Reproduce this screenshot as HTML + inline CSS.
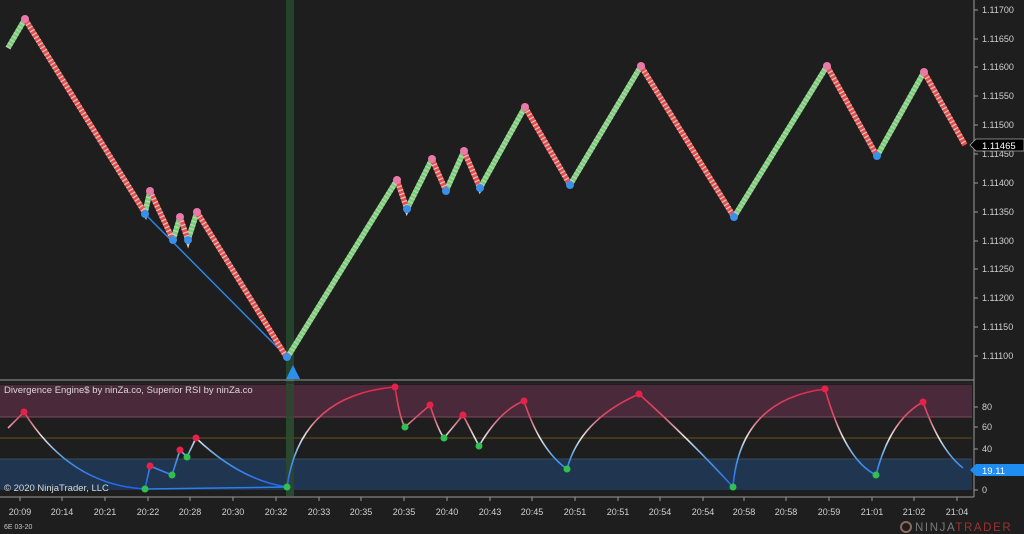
<!DOCTYPE html>
<html><head><meta charset="utf-8"><style>
html,body{margin:0;padding:0;background:#1e1e1e;overflow:hidden}
svg{display:block;font-family:"Liberation Sans",Arial,sans-serif}
</style></head><body>
<svg width="1024" height="534" viewBox="0 0 1024 534" xmlns="http://www.w3.org/2000/svg">
<defs>
<linearGradient id="rg" gradientUnits="userSpaceOnUse" x1="0" y1="385" x2="0" y2="490">
<stop offset="0" stop-color="#e6224a"/><stop offset="0.3" stop-color="#d8506a"/>
<stop offset="0.5" stop-color="#e8e8e8"/><stop offset="0.7" stop-color="#4a9ae8"/>
<stop offset="1" stop-color="#1f5ff0"/></linearGradient>
</defs>
<rect width="1024" height="534" fill="#1e1e1e"/>
<rect x="286" y="0" width="8" height="496" fill="#25422a"/>
<rect x="0" y="385" width="972" height="32" fill="#4a2a3a"/>
<line x1="0" y1="417" x2="972" y2="417" stroke="#7a4a5e" stroke-width="1"/>
<rect x="0" y="459" width="972" height="31" fill="#1f3550"/>
<line x1="0" y1="459" x2="972" y2="459" stroke="#3a4a5a" stroke-width="1"/>
<line x1="0" y1="438" x2="972" y2="438" stroke="#6a5020" stroke-width="1"/>
<rect x="286" y="383" width="8" height="113" fill="#2a4a2e" opacity="0.8"/>
<line x1="0" y1="380" x2="974" y2="380" stroke="#9a9a9a" stroke-width="1"/>
<line x1="0" y1="383" x2="972" y2="383" stroke="#2a2a2a" stroke-width="1"/>
<line x1="145" y1="214" x2="287" y2="357" stroke="#2a86e6" stroke-width="1.5"/>
<g fill="none" stroke-width="5.5" stroke-linecap="butt">
<g stroke="#70d66c">
<polyline points="8,48 25,19"/><polyline points="145,213 150,191"/><polyline points="173,240 180,217"/><polyline points="188,240 197,212"/>
<polyline points="287,358 397,180"/><polyline points="407,209 432,159"/><polyline points="446,191 464,151"/><polyline points="480,188 525,107"/>
<polyline points="570,185 641,66"/><polyline points="734,217 827,66"/><polyline points="877,156 924,72"/>
</g>
<g stroke="#ee4a48">
<polyline points="25,19 145,213"/><polyline points="150,191 173,240"/><polyline points="180,217 188,240"/><polyline points="197,212 287,358"/>
<polyline points="397,180 407,209"/><polyline points="432,159 446,191"/><polyline points="464,151 480,188"/><polyline points="525,107 570,185"/>
<polyline points="641,66 734,217"/><polyline points="827,66 877,156"/><polyline points="924,72 965,145"/>
</g>
<polyline stroke="#c8c8c8" stroke-width="5.5" stroke-dasharray="1.3 2.6" points="8,48 25,19 145,213 150,191 173,240 180,217 188,240 197,212 287,358 397,180 407,209 432,159 446,191 464,151 480,188 525,107 570,185 641,66 734,217 827,66 877,156 924,72 965,145"/>
</g>
<g fill="#e87aa8"><circle cx="25" cy="19" r="4"/><circle cx="150" cy="191" r="4"/><circle cx="180" cy="217" r="4"/><circle cx="197" cy="212" r="4"/><circle cx="397" cy="180" r="4"/><circle cx="432" cy="159" r="4"/><circle cx="464" cy="151" r="4"/><circle cx="525" cy="107" r="4"/><circle cx="641" cy="66" r="4"/><circle cx="827" cy="66" r="4"/><circle cx="924" cy="72" r="4"/></g>
<g fill="#3a90e8"><circle cx="145" cy="214" r="4"/><circle cx="173" cy="240" r="4"/><circle cx="188" cy="240" r="4"/><circle cx="287" cy="357" r="4"/><circle cx="407" cy="209" r="4"/><circle cx="446" cy="191" r="4"/><circle cx="480" cy="188" r="4"/><circle cx="570" cy="185" r="4"/><circle cx="734" cy="217" r="4"/><circle cx="877" cy="156" r="4"/></g>
<polygon points="293,365 286,379 300,379" fill="#2a90f0"/>
<g fill="none" stroke="url(#rg)" stroke-width="1.6">
<path d="M8,428 L24,412 Q70,485 145,489 L150,466 L172,475 L180,450 L187,457 L196,438 Q240,480 287,487 Q300,395 395,387 Q400,420 405,427 L430,405 Q438,430 444,438 L463,415 L479,446 Q500,410 524,401 Q540,450 567,469 Q580,420 639,394 Q690,440 733,487 Q740,400 825,389 Q845,460 876,475 Q890,420 923,402 Q940,450 963,468"/>
</g>
<line x1="145" y1="489" x2="287" y2="487" stroke="#2a80ee" stroke-width="1.5"/>
<g fill="#e6224a"><circle cx="24" cy="412" r="3.5"/><circle cx="150" cy="466" r="3.5"/><circle cx="180" cy="450" r="3.5"/><circle cx="196" cy="438" r="3.5"/><circle cx="395" cy="387" r="3.5"/><circle cx="430" cy="405" r="3.5"/><circle cx="463" cy="415" r="3.5"/><circle cx="524" cy="401" r="3.5"/><circle cx="639" cy="394" r="3.5"/><circle cx="825" cy="389" r="3.5"/><circle cx="923" cy="402" r="3.5"/></g>
<g fill="#30c050"><circle cx="145" cy="489" r="3.5"/><circle cx="172" cy="475" r="3.5"/><circle cx="187" cy="457" r="3.5"/><circle cx="287" cy="487" r="3.5"/><circle cx="405" cy="427" r="3.5"/><circle cx="444" cy="438" r="3.5"/><circle cx="479" cy="446" r="3.5"/><circle cx="567" cy="469" r="3.5"/><circle cx="733" cy="487" r="3.5"/><circle cx="876" cy="475" r="3.5"/></g>
<text x="4" y="393" font-size="9.5" fill="#d8d8d8">Divergence Engine$ by ninZa.co, Superior RSI by ninZa.co</text>
<text x="4" y="491" font-size="9.5" fill="#d8d8d8">© 2020 NinjaTrader, LLC</text>
<line x1="974" y1="0" x2="974" y2="497" stroke="#9a9a9a" stroke-width="1"/>
<g stroke="#9a9a9a">
<line x1="974" y1="10" x2="978" y2="10"/><line x1="974" y1="39" x2="978" y2="39"/><line x1="974" y1="67" x2="978" y2="67"/><line x1="974" y1="96" x2="978" y2="96"/><line x1="974" y1="125" x2="978" y2="125"/><line x1="974" y1="154" x2="978" y2="154"/><line x1="974" y1="183" x2="978" y2="183"/><line x1="974" y1="212" x2="978" y2="212"/><line x1="974" y1="241" x2="978" y2="241"/><line x1="974" y1="269" x2="978" y2="269"/><line x1="974" y1="298" x2="978" y2="298"/><line x1="974" y1="327" x2="978" y2="327"/><line x1="974" y1="356" x2="978" y2="356"/>
<line x1="974" y1="407" x2="978" y2="407"/><line x1="974" y1="427" x2="978" y2="427"/><line x1="974" y1="449" x2="978" y2="449"/><line x1="974" y1="490" x2="978" y2="490"/>
</g>
<g font-size="9" fill="#d0d0d0">
<text x="982" y="13">1.11700</text><text x="982" y="42">1.11650</text><text x="982" y="70">1.11600</text><text x="982" y="99">1.11550</text><text x="982" y="128">1.11500</text><text x="982" y="157">1.11450</text><text x="982" y="186">1.11400</text><text x="982" y="215">1.11350</text><text x="982" y="244">1.11300</text><text x="982" y="272">1.11250</text><text x="982" y="301">1.11200</text><text x="982" y="330">1.11150</text><text x="982" y="359">1.11100</text>
<text x="982" y="410">80</text><text x="982" y="430">60</text><text x="982" y="452">40</text><text x="982" y="493">0</text>
</g>
<polygon points="970,145 976,139 1024,139 1024,151 976,151" fill="#000" stroke="#aaa" stroke-width="0.8"/>
<text x="982" y="149" font-size="9.5" fill="#fff">1.11465</text>
<polygon points="970,470 976,464 1024,464 1024,476 976,476" fill="#1e8cf0"/>
<text x="982" y="474" font-size="9.5" fill="#fff">19.11</text>
<line x1="0" y1="497" x2="974" y2="497" stroke="#9a9a9a" stroke-width="1"/>
<g stroke="#9a9a9a">
<line x1="20" y1="497" x2="20" y2="501"/><line x1="62" y1="497" x2="62" y2="501"/><line x1="105" y1="497" x2="105" y2="501"/><line x1="148" y1="497" x2="148" y2="501"/><line x1="190" y1="497" x2="190" y2="501"/><line x1="233" y1="497" x2="233" y2="501"/><line x1="276" y1="497" x2="276" y2="501"/><line x1="319" y1="497" x2="319" y2="501"/><line x1="361" y1="497" x2="361" y2="501"/><line x1="404" y1="497" x2="404" y2="501"/><line x1="447" y1="497" x2="447" y2="501"/><line x1="490" y1="497" x2="490" y2="501"/><line x1="532" y1="497" x2="532" y2="501"/><line x1="575" y1="497" x2="575" y2="501"/><line x1="618" y1="497" x2="618" y2="501"/><line x1="660" y1="497" x2="660" y2="501"/><line x1="703" y1="497" x2="703" y2="501"/><line x1="744" y1="497" x2="744" y2="501"/><line x1="786" y1="497" x2="786" y2="501"/><line x1="829" y1="497" x2="829" y2="501"/><line x1="872" y1="497" x2="872" y2="501"/><line x1="914" y1="497" x2="914" y2="501"/><line x1="957" y1="497" x2="957" y2="501"/>
</g>
<g font-size="9" fill="#d0d0d0" text-anchor="middle">
<text x="20" y="515">20:09</text><text x="62" y="515">20:14</text><text x="105" y="515">20:21</text><text x="148" y="515">20:22</text><text x="190" y="515">20:28</text><text x="233" y="515">20:30</text><text x="276" y="515">20:32</text><text x="319" y="515">20:33</text><text x="361" y="515">20:35</text><text x="404" y="515">20:35</text><text x="447" y="515">20:40</text><text x="490" y="515">20:43</text><text x="532" y="515">20:45</text><text x="575" y="515">20:51</text><text x="618" y="515">20:51</text><text x="660" y="515">20:54</text><text x="703" y="515">20:54</text><text x="744" y="515">20:58</text><text x="786" y="515">20:58</text><text x="829" y="515">20:59</text><text x="872" y="515">21:01</text><text x="914" y="515">21:02</text><text x="957" y="515">21:04</text>
</g>
<text x="4" y="529" font-size="7" fill="#c8c8c8">6E 03-20</text>
<circle cx="906" cy="527" r="5" fill="none" stroke="#8a6a60" stroke-width="2"/>
<text x="915" y="531" font-size="11.5" fill="#7a7a7a" letter-spacing="1.6">NINJA<tspan fill="#a03030">TRADER</tspan></text>
</svg>
</body></html>
